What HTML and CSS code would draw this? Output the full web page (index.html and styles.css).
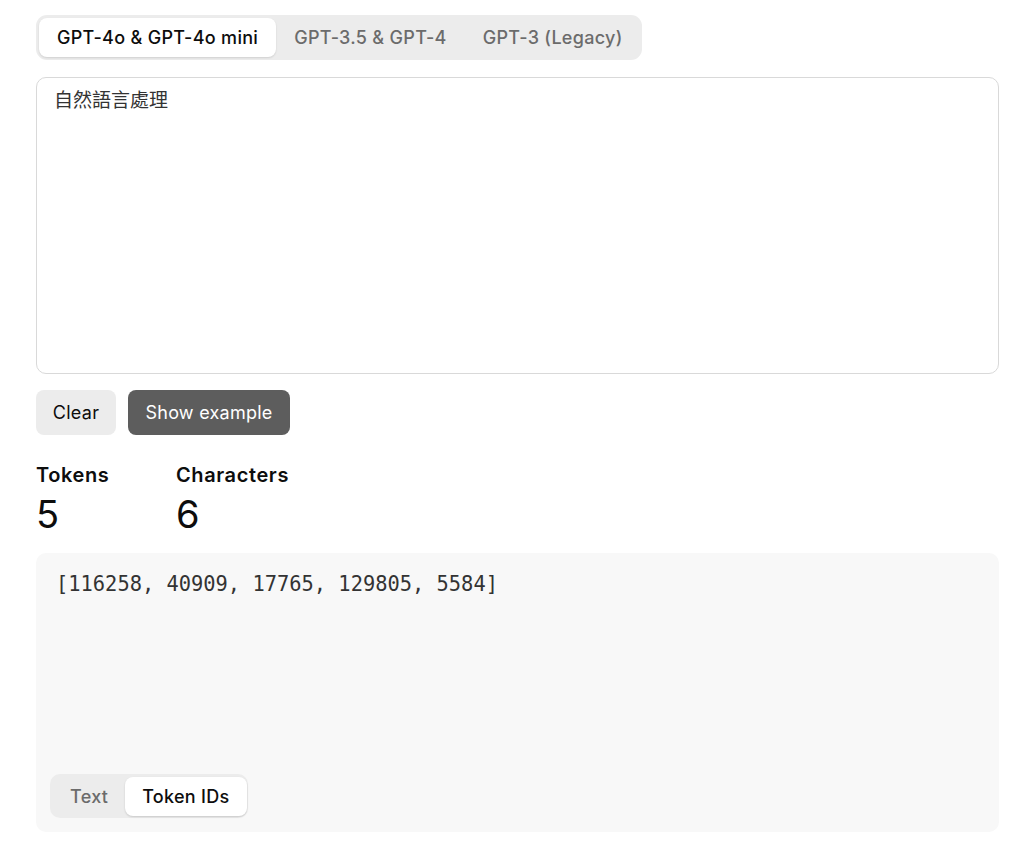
FILE: index.html
```html
<!DOCTYPE html>
<html>
<head>
<meta charset="utf-8">
<link rel="stylesheet" href="styles.css">
</head>
<body>
<div class="page">
  <div class="tabs">
    <div class="tab active">GPT-4o &amp; GPT-4o mini</div>
    <div class="tab">GPT-3.5 &amp; GPT-4</div>
    <div class="tab">GPT-3 (Legacy)</div>
  </div>
  <div class="input">自然語言處理</div>
  <div class="actions">
    <button class="btn btn-light">Clear</button>
    <button class="btn btn-dark">Show example</button>
  </div>
  <div class="stats">
    <div class="stat">
      <div class="stat-label">Tokens</div>
      <div class="stat-value">5</div>
    </div>
    <div class="stat">
      <div class="stat-label">Characters</div>
      <div class="stat-value">6</div>
    </div>
  </div>
  <div class="output">
    <div class="ids">[116258, 40909, 17765, 129805, 5584]</div>
    <div class="toggle">
      <div class="toggle-item">Text</div>
      <div class="toggle-item active">Token IDs</div>
    </div>
  </div>
</div>
</body>
</html>
```
FILE: styles.css
```css
* { box-sizing: border-box; }
html, body { margin: 0; padding: 0; background: #fff; }
body {
  font-family: Inter, "Noto Sans", "Noto Sans CJK TC", sans-serif;
  color: #0d0d0d;
}
.page {
  padding: 15px 25px 0 36px;
  display: flex;
  flex-direction: column;
}
.tabs {
  align-self: flex-start;
  display: flex;
  background: #ececec;
  border-radius: 11px;
  padding: 3px 1px 3px 3px;
}
.tab {
  height: 39px;
  padding: 0 18px;
  display: flex;
  align-items: center;
  font-size: 18px;
  font-weight: 500;
  color: #6b6b6b;
  border-radius: 8px;
  letter-spacing: 0.3px;
}
.tab.active {
  background: #fff;
  color: #0d0d0d;
  box-shadow: 0 1px 2px rgba(0,0,0,0.12);
}
.input {
  margin-top: 17px;
  height: 297px;
  border: 1px solid #d9d9d9;
  border-radius: 10px;
  padding: 9px 17px;
  font-family: "Noto Sans CJK TC", sans-serif;
  font-size: 19px;
  line-height: 24px;
  color: #333;
}
.actions {
  margin-top: 16px;
  display: flex;
  gap: 12px;
}
.btn {
  height: 45px;
  border: none;
  border-radius: 8px;
  padding: 0;
  font-family: Inter, sans-serif;
  font-size: 18px;
  letter-spacing: 0.25px;
}
.btn-light { background: #ececec; color: #0d0d0d; width: 80px; }
.btn-dark { background: #5d5d5d; color: #fff; width: 162px; }
.stats {
  margin-top: 27px;
  display: flex;
}
.stat { width: 140px; }
.stat-label {
  font-size: 20px;
  font-weight: 600;
  line-height: 26px;
  letter-spacing: 0.6px;
}
.stat-value {
  font-size: 38px;
  font-weight: 400;
  line-height: 48px;
  margin-top: 2px;
}
.output {
  margin-top: 15px;
  height: 279px;
  background: #f8f8f8;
  border-radius: 10px;
  padding: 18px 14px 14px 20px;
  display: flex;
  flex-direction: column;
}
.ids {
  font-family: "DejaVu Sans Mono", monospace;
  font-size: 20.4px;
  line-height: 26px;
  color: #333;
}
.toggle {
  margin-top: auto;
  align-self: flex-start;
  margin-left: -6px;
  display: flex;
  background: #ececec;
  border-radius: 10px;
  padding: 3px 1px 2px 3px;
}
.toggle-item {
  height: 39px;
  padding: 0 17px;
  display: flex;
  align-items: center;
  font-size: 18px;
  font-weight: 500;
  letter-spacing: 0.3px;
  color: #6b6b6b;
  border-radius: 8px;
}
.toggle-item.active {
  background: #fff;
  color: #0d0d0d;
  box-shadow: 0 1px 2px rgba(0,0,0,0.15);
}
```
